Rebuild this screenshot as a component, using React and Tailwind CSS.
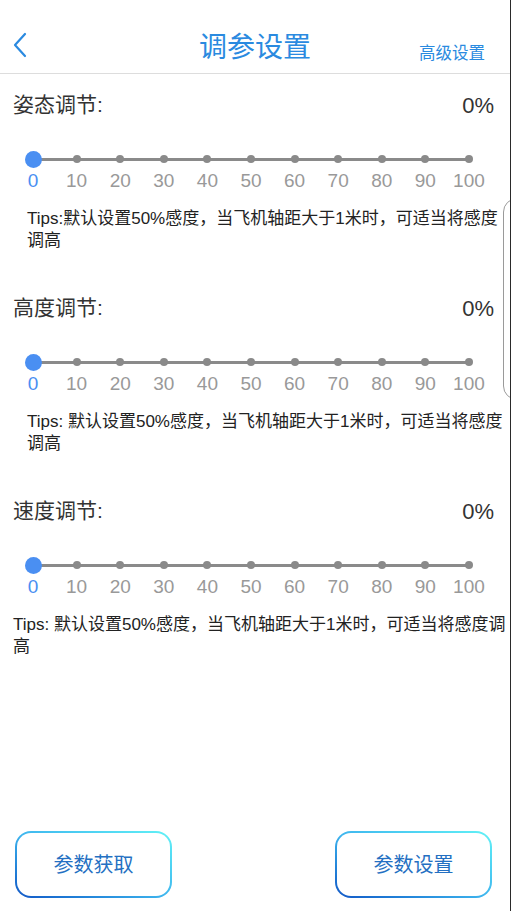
import { useState } from 'react'

const marks = [0, 10, 20, 30, 40, 50, 60, 70, 80, 90, 100]

function Slider({ value }) {
  return (
    <div className="ml-[33px] w-[436px]">
      {/* track + dots */}
      <div className="flex h-[20px] items-center justify-between bg-[linear-gradient(#8a8a8a,#8a8a8a)] bg-[length:100%_3px] bg-center bg-no-repeat">
        {marks.map(m => (
          <div key={m} className="flex w-0 items-center justify-center">
            {m === value ? (
              <span className="block h-[17px] w-[17px] shrink-0 rounded-full bg-[#4a8ff2]" />
            ) : (
              <span className="block h-[8px] w-[8px] shrink-0 rounded-full bg-[#8a8a8a]" />
            )}
          </div>
        ))}
      </div>
      {/* labels */}
      <div className="flex h-[24px] items-center justify-between">
        {marks.map(m => (
          <div key={m} className="flex w-0 justify-center">
            <span className={`whitespace-nowrap text-[19px] leading-[24px] ${m === value ? 'text-[#4a8ff2]' : 'text-[#999]'}`}>{m}</span>
          </div>
        ))}
      </div>
    </div>
  )
}

function Section({ title, value, tips, tipsLeft }) {
  return (
    <section className="pt-[16px]">
      <div className="flex h-[30px] items-center justify-between pl-[13px] pr-[16px] text-[21px] text-[#333]">
        <span>{title}</span>
        <span className="text-[22px]">{value}%</span>
      </div>
      <div className="mt-[29px]">
        <Slider value={value} />
      </div>
      <p className={`mt-[15px] text-[17px] leading-[22px] text-[#222] ${tipsLeft}`}>{tips}</p>
    </section>
  )
}

export default function App() {
  const [values] = useState({ attitude: 0, height: 0, speed: 0 })

  return (
    <div className="relative flex min-h-[911px] w-[511px] flex-col overflow-hidden border-r border-[#2a2a2a] bg-white font-['Liberation_Sans','Noto_Sans_CJK_SC',sans-serif]">
      {/* Header */}
      <header className="grid h-[74px] grid-cols-[1fr_auto_1fr] border-b border-[#dddddd]">
        <div className="flex items-start pl-[12px] pt-[32px]">
          <svg width="16" height="26" viewBox="0 0 16 26" fill="none">
            <path d="M13 2 L3 13 L13 24" stroke="#2a8ae0" strokeWidth="2.2" strokeLinecap="round" strokeLinejoin="round" />
          </svg>
        </div>
        <h1 className="pt-[29px] text-[28px] leading-[38px] text-[#2a8ae0]">调参设置</h1>
        <div className="flex items-start justify-end pr-[25px] pt-[42px]">
          <span className="text-[16.5px] leading-[22px] text-[#2a8ae0]">高级设置</span>
        </div>
      </header>

      <main>
        <Section
          title="姿态调节:"
          value={values.attitude}
          tips="Tips:默认设置50%感度，当飞机轴距大于1米时，可适当将感度调高"
          tipsLeft="pl-[27px]"
        />
        <div className="pt-[25px]">
          <Section
            title="高度调节:"
            value={values.height}
            tips="Tips: 默认设置50%感度，当飞机轴距大于1米时，可适当将感度调高"
            tipsLeft="pl-[27px]"
          />
        </div>
        <div className="pt-[25px]">
          <Section
            title="速度调节:"
            value={values.speed}
            tips="Tips: 默认设置50%感度，当飞机轴距大于1米时，可适当将感度调高"
            tipsLeft="pl-[13px]"
          />
        </div>
      </main>

      {/* Bottom buttons */}
      <footer className="mt-auto flex justify-between pb-[13px] pl-[15px] pr-[18px]">
        {['参数获取', '参数设置'].map(label => (
          <button key={label} className="h-[67px] w-[157px] rounded-[16px] bg-gradient-to-tr from-[#1557c6] via-[#3fb6ee] to-[#62f2f6] p-[2px]">
            <span className="flex h-full w-full items-center justify-center rounded-[14px] bg-white text-[20px] text-[#2470c2]">
              {label}
            </span>
          </button>
        ))}
      </footer>

      {/* edge of a panel peeking in from the right */}
      <div className="absolute left-[503px] top-[198px] h-[202px] w-[30px] rounded-l-[14px] border border-[#9a9a9a]" />
    </div>
  )
}
